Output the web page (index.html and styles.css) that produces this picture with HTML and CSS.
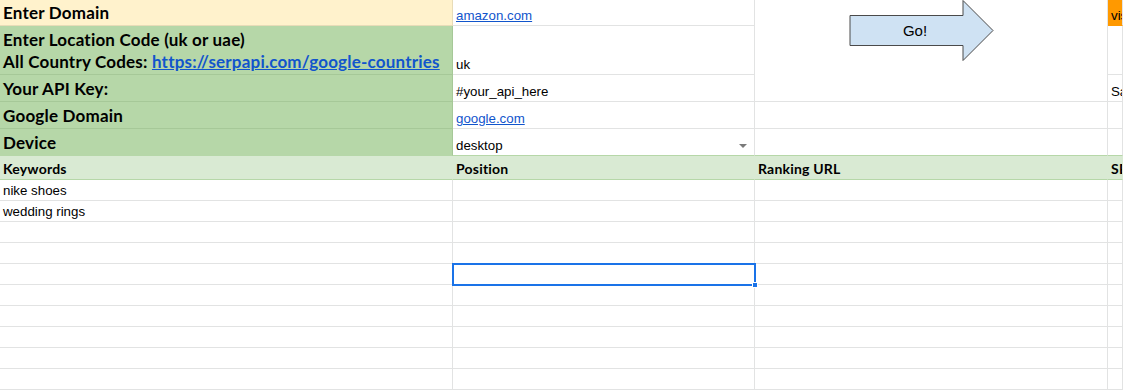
FILE: index.html
```html
<!DOCTYPE html>
<html lang="en">
  <head>
    <meta charset="UTF-8" />
    <meta name="viewport" content="width=device-width, initial-scale=1.0" />
    <title>Rank Checker</title>
    <link rel="stylesheet" href="styles.css">
  </head>
  <body>
    <div class="sheet">
      <!-- settings block -->
      <div class="cell label domain">Enter Domain</div>
      <div class="cell"><a href="#">amazon.com</a></div>
      <div class="cell merged"></div>
      <div class="cell visit">vis</div>

      <div class="cell label two-line">
        <span>Enter Location Code (uk or uae)</span>
        <span>All Country Codes: <a href="#">https://serpapi.com/google-countries</a></span>
      </div>
      <div class="cell">uk</div>
      <div class="cell"></div>

      <div class="cell label">Your API Key:</div>
      <div class="cell">#your_api_here</div>
      <div class="cell">Sa</div>

      <div class="cell label">Google Domain</div>
      <div class="cell"><a href="#">google.com</a></div>
      <div class="cell"></div>
      <div class="cell"></div>

      <div class="cell label last">Device</div>
      <div class="cell last">desktop<span class="dropdown"></span></div>
      <div class="cell last"></div>
      <div class="cell last"></div>

      <!-- results table -->
      <div class="cell head">Keywords</div>
      <div class="cell head">Position</div>
      <div class="cell head">Ranking URL</div>
      <div class="cell head">SERP</div>

      <div class="cell">nike shoes</div>
      <div class="cell"></div>
      <div class="cell"></div>
      <div class="cell"></div>

      <div class="cell">wedding rings</div>
      <div class="cell"></div>
      <div class="cell"></div>
      <div class="cell"></div>

      <div class="cell"></div><div class="cell"></div><div class="cell"></div><div class="cell"></div>
      <div class="cell"></div><div class="cell"></div><div class="cell"></div><div class="cell"></div>
      <div class="cell"></div><div class="cell selected"><span class="handle"></span></div><div class="cell"></div><div class="cell"></div>
      <div class="cell"></div><div class="cell"></div><div class="cell"></div><div class="cell"></div>
      <div class="cell"></div><div class="cell"></div><div class="cell"></div><div class="cell"></div>
      <div class="cell"></div><div class="cell"></div><div class="cell"></div><div class="cell"></div>
      <div class="cell"></div><div class="cell"></div><div class="cell"></div><div class="cell"></div>
      <div class="cell"></div><div class="cell"></div><div class="cell"></div><div class="cell"></div>

      <!-- Go! button drawing -->
      <svg class="go-arrow" width="146" height="63" viewBox="0 0 146 63">
        <polygon points="1,15.5 114,15.5 114,0.5 144,30.5 114,60.5 114,45.5 1,45.5"
                 fill="#cfe2f3" stroke="#4a4a4a" stroke-width="1" />
        <text x="66" y="35.5" text-anchor="middle">Go!</text>
      </svg>
    </div>
  </body>
</html>
```

FILE: styles.css
```css
* {
  margin: 0;
  padding: 0;
  box-sizing: border-box;
}

body {
  background-color: #fff;
  color: #000;
  font-family: "Liberation Sans", Arial, sans-serif;
  font-size: 13.3px;
  overflow: hidden;
}

/* 表格网格 */
.sheet {
  position: relative;
  display: grid;
  grid-template-columns: 453px 302px 353px 1fr;
  grid-template-rows: 26px 49px 27px 27px 27px 24px repeat(10, 21px);
}

.cell {
  display: flex;
  align-items: flex-end;
  padding: 0 3px 2px;
  line-height: 15px;
  white-space: nowrap;
  overflow: hidden;
  border-right: 1px solid #e2e3e3;
  border-bottom: 1px solid #e2e3e3;
}

.cell a {
  color: #1155cc;
  text-decoration: underline;
}

.merged {
  grid-column: 3;
  grid-row: 1 / span 3;
}

.visit {
  background-color: #ff9900;
  border-bottom-color: #ff9900;
}

/* 左侧设置标签 */
.label {
  background-color: #b6d7a8;
  border-color: #a6c898;
  font-family: Lato, "Liberation Sans", sans-serif;
  font-weight: bold;
  font-size: 17px;
  letter-spacing: 0.2px;
  line-height: 22px;
  padding-bottom: 1px;
}

.label.domain {
  background-color: #fff2cc;
  border-color: #e8dcb8;
}

.two-line {
  flex-direction: column;
  align-items: flex-start;
  justify-content: flex-end;
}

.last {
  border-bottom-color: #b6d7a8;
}

.dropdown {
  margin-left: auto;
  margin-right: 4px;
  margin-bottom: 5px;
  border-left: 4px solid transparent;
  border-right: 4px solid transparent;
  border-top: 4px solid #7a7a7a;
}

.head {
  background-color: #d9ead3;
  border-right-color: #d9ead3;
  border-bottom-color: #b6d7a8;
  font-family: Lato, "Liberation Sans", sans-serif;
  font-weight: bold;
  font-size: 14px;
  letter-spacing: 0.2px;
  padding-bottom: 3px;
}

/* 当前选中的单元格 */
.selected {
  position: relative;
  overflow: visible;
}

.selected::after {
  content: "";
  position: absolute;
  top: -1px;
  left: -1px;
  right: -2px;
  bottom: -2px;
  border: 2px solid #1a73e8;
}

.handle {
  position: absolute;
  right: -4px;
  bottom: -4px;
  width: 6px;
  height: 6px;
  background-color: #1a73e8;
  border: 1px solid #fff;
  z-index: 1;
}

.go-arrow {
  position: absolute;
  left: 849px;
  top: 0;
}

.go-arrow text {
  font-family: "Liberation Sans", Arial, sans-serif;
  font-size: 15px;
  fill: #000;
}
```
